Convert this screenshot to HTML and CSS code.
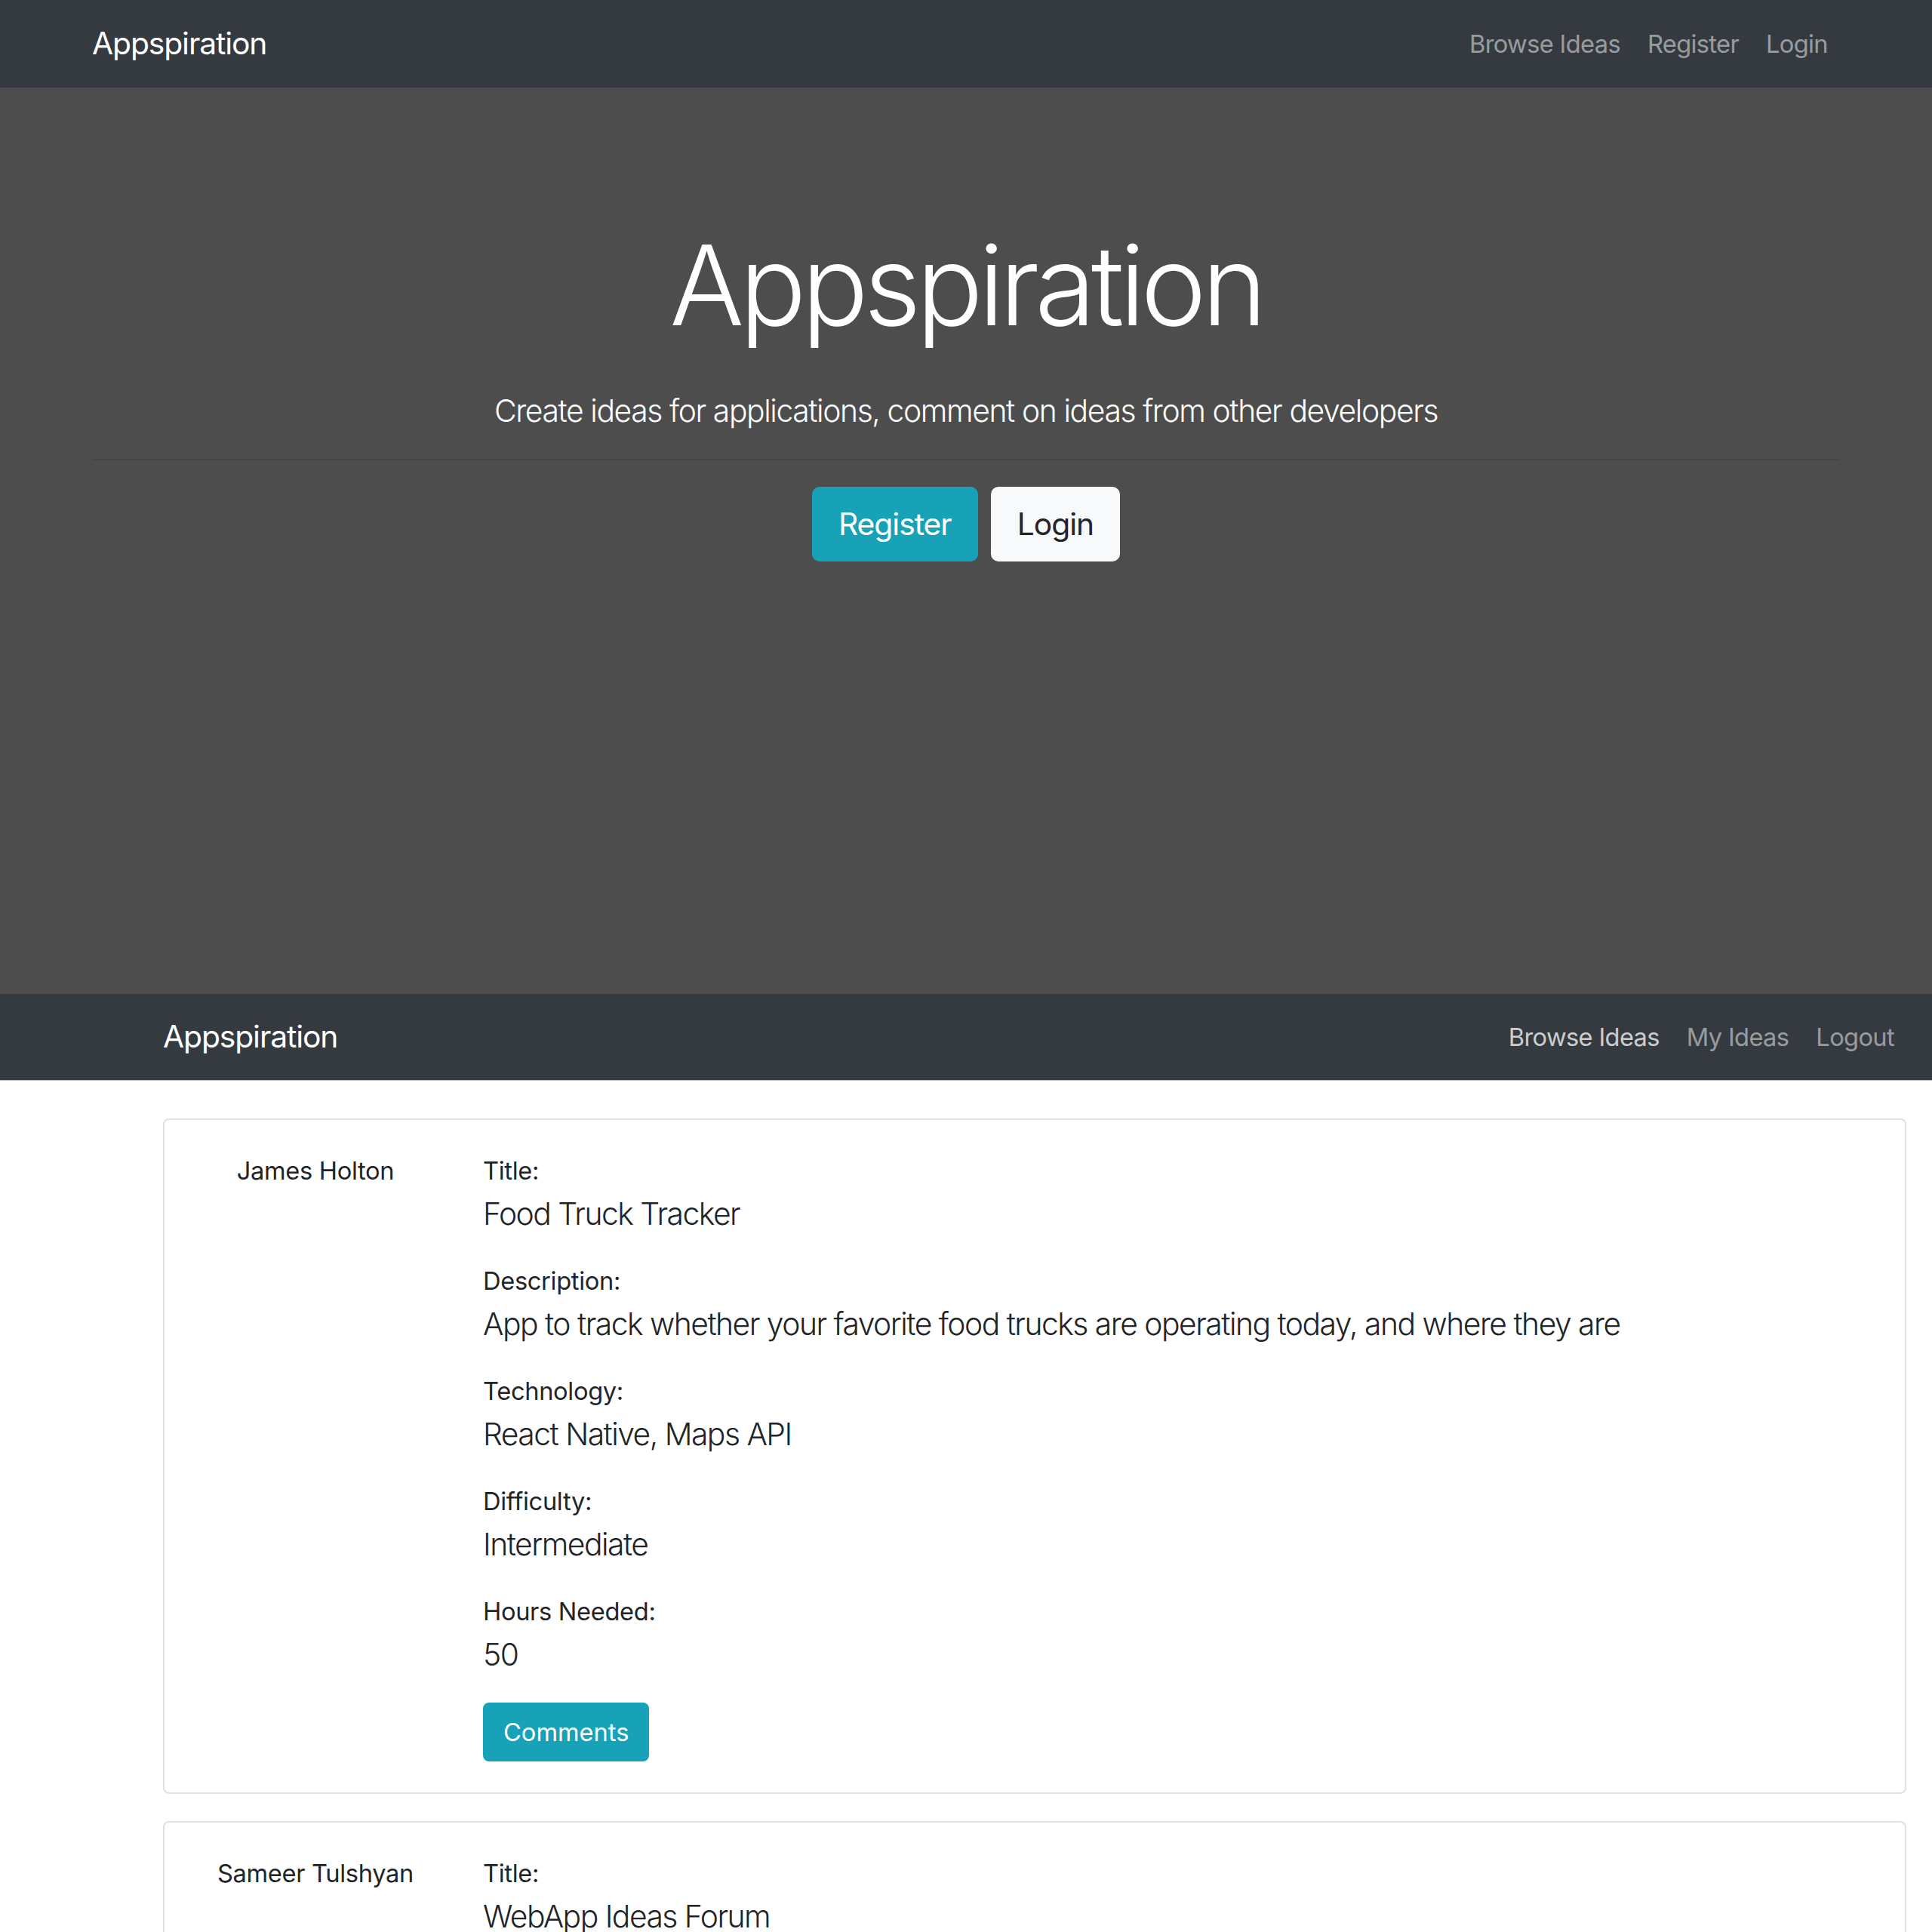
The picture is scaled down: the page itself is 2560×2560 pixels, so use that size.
FILE: index.html
```html
<!DOCTYPE html>
<html lang="en">
<head>
<meta charset="utf-8">
<title>Appspiration</title>
<link rel="stylesheet" href="styles.css">
</head>
<body>
<section class="shot shot-landing">
  <nav class="navbar navbar-landing">
    <a class="brand">Appspiration</a>
    <ul class="nav">
      <li><a class="nav-link">Browse Ideas</a></li>
      <li><a class="nav-link">Register</a></li>
      <li><a class="nav-link">Login</a></li>
    </ul>
  </nav>
  <header class="hero">
    <h1 class="hero-title">Appspiration</h1>
    <p class="hero-lead">Create ideas for applications, comment on ideas from other developers</p>
    <hr class="hero-rule">
    <div class="hero-actions">
      <a class="btn btn-lg btn-info">Register</a>
      <a class="btn btn-lg btn-light">Login</a>
    </div>
  </header>
</section>
<section class="shot shot-ideas">
  <nav class="navbar navbar-app">
    <a class="brand">Appspiration</a>
    <ul class="nav">
      <li><a class="nav-link active">Browse Ideas</a></li>
      <li><a class="nav-link">My Ideas</a></li>
      <li><a class="nav-link">Logout</a></li>
    </ul>
  </nav>
  <main class="ideas">
    <article class="card">
      <div class="author">James Holton</div>
      <div class="details">
        <div class="label">Title:</div>
        <p class="value">Food Truck Tracker</p>
        <div class="label">Description:</div>
        <p class="value">App to track whether your favorite food trucks are operating today, and where they are</p>
        <div class="label">Technology:</div>
        <p class="value">React Native, Maps API</p>
        <div class="label">Difficulty:</div>
        <p class="value">Intermediate</p>
        <div class="label">Hours Needed:</div>
        <p class="value">50</p>
        <a class="btn btn-info">Comments</a>
      </div>
    </article>
    <article class="card">
      <div class="author">Sameer Tulshyan</div>
      <div class="details">
        <div class="label">Title:</div>
        <p class="value">WebApp Ideas Forum</p>
        <div class="label">Description:</div>
        <p class="value">A forum where developers can share and discuss ideas for web applications</p>
        <div class="label">Technology:</div>
        <p class="value">React, Node.js</p>
      </div>
    </article>
  </main>
</section>
</body>
</html>
```
FILE: styles.css
```css
html {
  font-size: 32.64px;
}

body {
  margin: 0;
  font-family: Inter, "Liberation Sans", sans-serif;
  color: #212529;
  background: #fff;
  line-height: 1.5;
}

a {
  text-decoration: none;
}

.navbar {
  display: flex;
  align-items: center;
  justify-content: space-between;
  box-sizing: border-box;
  background: #343a40;
}

.navbar-landing {
  height: 116px;
  padding: 0 120px 0 122px;
}

.navbar-app {
  height: 115px;
  padding: 0 32px 0 216px;
  border-bottom: 1px solid #b9bbbd;
}

.brand {
  color: #fff;
  font-size: 1.25rem;
  line-height: 1.5;
  letter-spacing: -0.027em;
}

.nav {
  display: flex;
  list-style: none;
  margin: 0;
  padding: 0;
}

.nav-link {
  display: block;
  padding: 0 18px;
  font-size: 1rem;
  letter-spacing: -0.02em;
  color: rgba(255, 255, 255, 0.5);
}

.nav-link.active {
  color: rgba(255, 255, 255, 0.75);
}

.hero {
  box-sizing: border-box;
  height: 1201px;
  padding: 174px 122px 0;
  background: #4d4d4d;
  color: #fff;
  text-align: center;
}

.hero-title {
  margin: 0 0 48px;
  font-size: 4.5rem;
  font-weight: 300;
  line-height: 1.2;
  letter-spacing: -0.042em;
}

.hero-lead {
  margin: 0 0 33px;
  font-size: 1.25rem;
  font-weight: 300;
  line-height: 61px;
  letter-spacing: -0.034em;
}

.hero-rule {
  margin: 0 0 35px;
  border: 0;
  border-top: 2px solid rgba(0, 0, 0, 0.1);
}

.hero-actions {
  display: flex;
  justify-content: center;
  gap: 17px;
}

.btn {
  display: inline-flex;
  align-items: center;
  justify-content: center;
  box-sizing: border-box;
  border: 2px solid transparent;
  font-weight: 400;
}

.btn-lg {
  height: 99px;
  padding: 0 33px;
  border-radius: 10px;
  font-size: 1.25rem;
  letter-spacing: -0.025em;
}

.btn-info {
  background: #17a2b8;
  border-color: #17a2b8;
  color: #fff;
}

.btn-light {
  background: #f8f9fa;
  border-color: #f8f9fa;
  color: #212529;
}

.ideas {
  padding: 50px 34px 0 216px;
}

.card {
  display: grid;
  grid-template-columns: 320px 1fr;
  column-gap: 62px;
  padding: 42px 40px 41px;
  margin-bottom: 36px;
  border: 2px solid #e1e1e1;
  border-radius: 8px;
}

.author {
  text-align: center;
  font-size: 1rem;
  line-height: 51px;
  letter-spacing: -0.01em;
}

.label {
  font-size: 1rem;
  line-height: 51px;
  letter-spacing: -0.01em;
}

.value {
  margin: 0 0 33px;
  font-size: 1.25rem;
  font-weight: 300;
  line-height: 62px;
  letter-spacing: -0.037em;
}

.details .btn {
  height: 78px;
  padding: 0 25px;
  border-radius: 8px;
  font-size: 1rem;
}
```
